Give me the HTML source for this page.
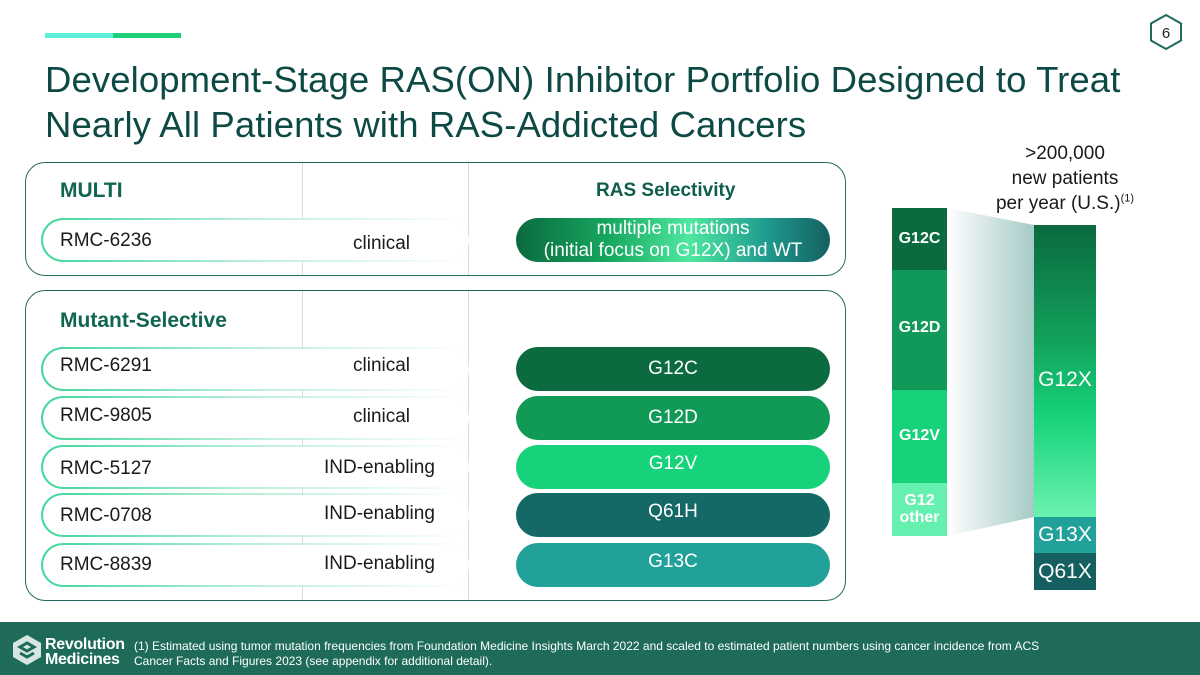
<!DOCTYPE html>
<html><head><meta charset="utf-8"><style>
*{margin:0;padding:0;box-sizing:border-box}
body{width:1200px;height:675px;background:#fff;font-family:"Liberation Sans",sans-serif;position:relative;overflow:hidden;color:#1a1a1a}
.a{position:absolute}
.title{left:45px;top:57px;font-size:36.5px;line-height:45px;color:#0e4a45;letter-spacing:0.1px}
.box{position:absolute;left:25px;width:821px;border:1.5px solid #1f6b60;border-radius:20px}
.vl{position:absolute;width:1px;background:#d5dede}
.row{position:absolute;left:41px;width:430px;height:44px;border-radius:22px;border:2px solid transparent;
background:linear-gradient(#fff,#fff) padding-box,linear-gradient(90deg,#3fd69a,#bdf0d8 50%,rgba(255,255,255,0)) border-box;}
.rl{position:absolute;font-size:19px;color:#1a1a1a}
.pill{position:absolute;left:516px;width:314px;height:44px;border-radius:22px;color:#fff;font-size:19px;text-align:center;line-height:44px}
.hd{position:absolute;font-weight:bold;color:#106651;font-size:21px}
.bar{position:absolute;color:#fff;font-weight:bold;font-size:16px;text-align:center}
</style></head><body>
<div class="a" style="left:45px;top:33px;width:68px;height:5px;background:#5ef0d6"></div>
<div class="a" style="left:113px;top:33px;width:68px;height:5px;background:#1ccf78"></div>
<svg class="a" style="left:1148px;top:13px" width="36" height="38" viewBox="0 0 36 38"><polygon points="18,2 33,10.5 33,27.5 18,36 3,27.5 3,10.5" fill="none" stroke="#1c6b5d" stroke-width="2"/><text x="18" y="25" text-anchor="middle" font-family="Liberation Sans" font-size="15" fill="#222">6</text></svg>
<div class="a title">Development-Stage RAS(ON) Inhibitor Portfolio Designed to Treat<br>Nearly All Patients with RAS-Addicted Cancers</div>

<div class="box" style="top:162px;height:114px"></div>
<div class="box" style="top:290px;height:311px"></div>
<div class="vl" style="left:302px;top:163px;height:112px"></div>
<div class="vl" style="left:468px;top:163px;height:112px"></div>
<div class="vl" style="left:302px;top:291px;height:309px"></div>
<div class="vl" style="left:468px;top:291px;height:309px"></div>

<div class="hd" style="left:60px;top:179px">MULTI</div>
<div class="hd" style="left:596px;top:180px;font-size:19px;color:#0f5d4c">RAS Selectivity</div>
<div class="hd" style="left:60px;top:309px">Mutant-Selective</div>

<div class="row" style="top:218px"></div><div class="rl" style="left:60px;top:230px">RMC-6236</div><div class="rl" style="left:353px;top:233px">clinical</div>
<div class="row" style="top:347px"></div><div class="rl" style="left:60px;top:355px">RMC-6291</div><div class="rl" style="left:353px;top:355px">clinical</div>
<div class="row" style="top:396px"></div><div class="rl" style="left:60px;top:405px">RMC-9805</div><div class="rl" style="left:353px;top:406px">clinical</div>
<div class="row" style="top:445px"></div><div class="rl" style="left:60px;top:458px">RMC-5127</div><div class="rl" style="left:324px;top:457px">IND-enabling</div>
<div class="row" style="top:493px"></div><div class="rl" style="left:60px;top:505px">RMC-0708</div><div class="rl" style="left:324px;top:503px">IND-enabling</div>
<div class="row" style="top:543px"></div><div class="rl" style="left:60px;top:554px">RMC-8839</div><div class="rl" style="left:324px;top:553px">IND-enabling</div>

<div class="pill" style="top:218px;line-height:22px;font-size:19px;background:linear-gradient(90deg,#0b6a3e,#16a860 30%,#4fe8a0 55%,#1f9a8e 80%,#146060)">multiple mutations<br>(initial focus on G12X) and WT</div>
<div class="pill" style="top:347px;background:#0b6a3e">G12C</div>
<div class="pill" style="top:396px;background:#119a56">G12D</div>
<div class="pill" style="top:445px;background:#16d27a;line-height:38px">G12V</div>
<div class="pill" style="top:493px;background:#146866;line-height:38px">Q61H</div>
<div class="pill" style="top:543px;background:#22a19b;line-height:38px">G13C</div>

<div class="a" style="left:980px;top:141px;width:170px;text-align:center;font-size:19px;line-height:25px;color:#1a1a1a">&gt;200,000<br>new patients<br>per year (U.S.)<sup style="font-size:11px;line-height:0">(1)</sup></div>
<svg class="a" style="left:947px;top:208px" width="88" height="330"><defs><linearGradient id="g" x1="0" x2="1"><stop offset="0" stop-color="#fff"/><stop offset="1" stop-color="#a6cac6"/></linearGradient></defs><polygon points="0,0 87,17 87,309 0,328" fill="url(#g)"/></svg>
<div class="bar" style="left:892px;top:208px;width:55px;height:62px;background:#0b6a3e;line-height:62px">G12C</div>
<div class="bar" style="left:892px;top:270px;width:55px;height:120px;background:#11995a;line-height:116px">G12D</div>
<div class="bar" style="left:892px;top:390px;width:55px;height:93px;background:#16d27a;line-height:92px">G12V</div>
<div class="bar" style="left:892px;top:483px;width:55px;height:53px;background:#66f0b0;line-height:17px;padding-top:9px">G12<br>other</div>
<div class="bar" style="left:1034px;top:225px;width:62px;height:292px;font-weight:normal;font-size:21px;line-height:310px;background:linear-gradient(#0b6a3e,#12a25c 40%,#16d27a 65%,#6af2b0)">G12X</div>
<div class="bar" style="left:1034px;top:517px;width:62px;height:36px;background:#22a19b;font-weight:normal;font-size:21px;line-height:36px">G13X</div>
<div class="bar" style="left:1034px;top:553px;width:62px;height:37px;background:#146060;font-weight:normal;font-size:21px;line-height:37px">Q61X</div>

<div class="a" style="left:0;top:622px;width:1200px;height:53px;background:#1e6b5a"></div>
<svg class="a" style="left:11px;top:634px" width="32" height="32" viewBox="0 0 32 32"><polygon points="16,1 30,9 30,23 16,31 2,23 2,9" fill="#d8e6e2"/><path d="M9,13 L16,9 L23,13 L16,17 Z M9,19 L16,23 L23,19" fill="none" stroke="#1e6b5a" stroke-width="3"/></svg>
<div class="a" style="left:45px;top:637px;color:#fff;font-size:16px;line-height:15px;font-weight:bold;letter-spacing:-0.3px">Revolution<br>Medicines</div>
<div class="a" style="left:134px;top:639px;color:#fff;font-size:12px;line-height:15px">(1) Estimated using tumor mutation frequencies from Foundation Medicine Insights March 2022 and scaled to estimated patient numbers using cancer incidence from ACS<br>Cancer Facts and Figures 2023 (see appendix for additional detail).</div>
</body></html>
